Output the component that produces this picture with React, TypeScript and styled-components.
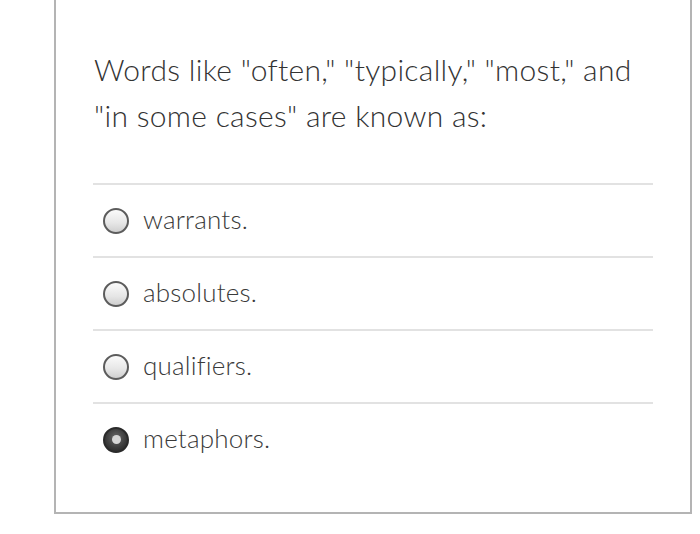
import React from 'react';
import styled, { createGlobalStyle } from 'styled-components';

const GlobalStyle = createGlobalStyle`
  html, body {
    margin: 0;
    padding: 0;
    background: #ffffff;
  }
  body {
    font-family: Lato, 'Open Sans', 'Liberation Sans', sans-serif;
  }
`;

const Page = styled.div`
  padding: 0 8px 0 54px;
`;

const Card = styled.div`
  width: 638px;
  box-sizing: border-box;
  border: 2px solid #b4b4b4;
  border-top: none;
  padding: 46px 37px 37px 37px;
  background: #fff;
`;

const Question = styled.p`
  margin: 0 0 45px 0;
  padding-left: 1px;
  font-size: 30px;
  letter-spacing: 0.3px;
  line-height: 46px;
  font-weight: 300;
  color: #333;
  white-space: nowrap;
`;

const Options = styled.div`
  display: flex;
  flex-direction: column;
`;

const OptionRow = styled.label`
  display: flex;
  align-items: center;
  gap: 14px;
  height: 73px;
  box-sizing: border-box;
  border-top: 2px solid #e2e2e2;
  padding-left: 10px;
  cursor: pointer;
`;

const Radio = styled.span<{ $checked?: boolean }>`
  width: 26px;
  height: 26px;
  box-sizing: border-box;
  border-radius: 50%;
  border: 2px solid ${(p) => (p.$checked ? '#2a2a2a' : '#5c5c5c')};
  background: ${(p) =>
    p.$checked
      ? 'radial-gradient(circle at 50% 40%, #6a6a6a 0%, #3a3a3a 60%, #222 100%)'
      : 'linear-gradient(180deg, #fbfbfb 0%, #e6e6e6 60%, #cfcfcf 100%)'};
  flex-shrink: 0;
  display: flex;
  align-items: center;
  justify-content: center;

  &::after {
    content: '';
    display: ${(p) => (p.$checked ? 'block' : 'none')};
    width: 9px;
    height: 9px;
    border-radius: 50%;
    background: #d6d6d6;
  }
`;

const OptionText = styled.span`
  font-size: 26px;
  letter-spacing: 0.2px;
  font-weight: 300;
  color: #3a3a3a;
  line-height: 1;
  margin-top: -3px;
`;

const answers = [
  { text: 'warrants.', checked: false },
  { text: 'absolutes.', checked: false },
  { text: 'qualifiers.', checked: false },
  { text: 'metaphors.', checked: true },
];

const App = () => {
  return (
    <Page>
      <GlobalStyle />
      <Card>
        <Question>
          Words like "often," "typically," "most," and
          <br />
          "in some cases" are known as:
        </Question>
        <Options>
          {answers.map((a) => (
            <OptionRow key={a.text}>
              <Radio $checked={a.checked} />
              <OptionText>{a.text}</OptionText>
            </OptionRow>
          ))}
        </Options>
      </Card>
    </Page>
  );
};

export default App;
